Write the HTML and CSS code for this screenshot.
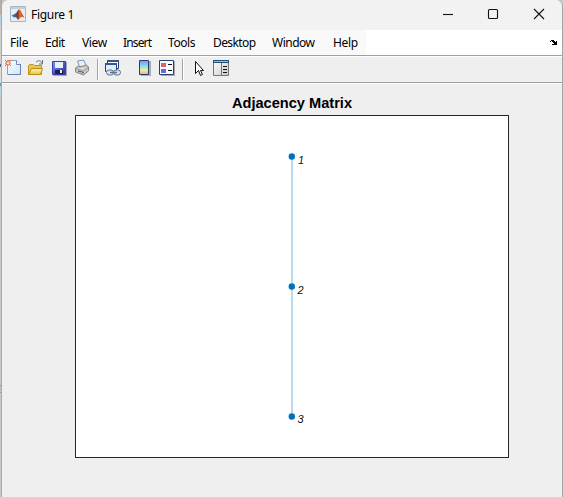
FILE: index.html
```html
<!DOCTYPE html>
<html lang="en">
<head>
<meta charset="utf-8">
<title>Figure 1</title>
<link rel="stylesheet" href="styles.css">
</head>
<body>
<div class="desktop">
<div class="edge"></div>
<main class="window">
  <header class="titlebar">
    <svg class="logo" width="16" height="16" viewBox="0 0 16 16">
      <defs><linearGradient id="flame"><stop offset="0" stop-color="#3f8fc8"/><stop offset=".36" stop-color="#335a88"/><stop offset=".48" stop-color="#8e3420"/><stop offset=".65" stop-color="#ed6925"/><stop offset="1" stop-color="#c04014"/></linearGradient></defs>
      <path fill="#e8edf2" stroke="#a6b5c4" d="M.5 .5h15v15H.5z"/><path fill="#c4cfdb" d="M1 1h14v2H1z"/>
      <path fill="url(#flame)" d="M1.500 9.500l4-2c2-1 2-4 3.500-4 2 0 3 5 5.500 8-2-1-3-1-4 0l-2.500 2.500-2-3-2 .5z"/>
    </svg>
    <span class="caption">Figure 1</span>
    <div class="controls">
      <svg width="12" height="12"><path d="M1 6.500h10"/></svg>
      <svg width="12" height="12"><rect x="1.500" y="1.500" width="9" height="9" rx="1"/></svg>
      <svg width="12" height="12"><path d="M1 1l10 10M11 1L1 11"/></svg>
    </div>
  </header>
  <nav class="menubar">
    <div class="menus"><span class="m-file">File</span><span class="m-edit">Edit</span><span class="m-view">View</span><span class="m-insert">Insert</span><span class="m-tools">Tools</span><span class="m-desktop">Desktop</span><span class="m-window">Window</span><span class="m-help">Help</span></div>
    <svg class="dock" width="8" height="6" viewBox="0 0 8 6" shape-rendering="crispEdges"><path d="M1 0h3v1h1v1h1v-1h1v4H2v-1h2v-1H3v-1H2v-1H1v1H0V1h1z"/></svg>
  </nav>
  <div class="toolbar">
    <svg width="190" height="25" viewBox="0 1 190 25">
      <defs>
        <linearGradient id="paper" x2="1" y2="1"><stop offset="0" stop-color="#fff"/><stop offset="1" stop-color="#cfe3fa"/></linearGradient>
        <linearGradient id="gold" x2="0" y2="1"><stop offset="0" stop-color="#fff4a8"/><stop offset="1" stop-color="#e8c04c"/></linearGradient>
        <linearGradient id="disk" x2="1" y2="1"><stop offset="0" stop-color="#7f93f0"/><stop offset="1" stop-color="#242c98"/></linearGradient>
        <linearGradient id="spectrum" x2="0" y2="1"><stop offset="0" stop-color="#9187ed"/><stop offset=".4" stop-color="#83dcec"/><stop offset=".7" stop-color="#f3eca0"/><stop offset="1" stop-color="#f4a181"/></linearGradient>
        <linearGradient id="silver" x2="1" y2="1"><stop offset="0" stop-color="#fff"/><stop offset="1" stop-color="#c9c9c9"/></linearGradient>
      </defs>
      <!-- new -->
      <path fill="url(#paper)" stroke="#8ba2c2" d="M5.500 4.500h9l4 4v10h-13z"/><path fill="#fff" stroke="#6787b4" d="M14.500 4.500v4h4"/><path fill="none" stroke="#6484b2" d="M18.500 8v10.500H6"/>
      <path stroke="#e08a68" stroke-width="1.400" d="M6 4v6M3 7h6"/><path stroke="#d9603c" d="M3 4l6 6M9 4l-6 6"/><path fill="#ffd8a0" d="M5 6h2v2H5z"/>
      <!-- open -->
      <path fill="#e8c64c" stroke="#c2951a" d="M26.500 18.500v-9l1-1h4l1 1h7v9z"/><path fill="url(#gold)" stroke="#bd8d14" d="M26.500 18.500l3-6h11l-2 6z"/><path fill="none" stroke="#607796" d="M34 6q4-3 6 1M40.500 4v4H37"/>
      <!-- save -->
      <path fill="#a6a7b5" d="M51 6h14v14H51z"/><path fill="url(#disk)" stroke="#3a40a8" d="M50.500 5.500h13v13h-13z"/><path fill="#e4f0fb" d="M53 6h8v6h-8z"/><path fill="#17204e" d="M53 14h8v4h-8z"/><path fill="#eee" d="M58 14h2v3h-2z"/>
      <!-- print -->
      <path fill="#e3f0fc" stroke="#7a94b5" d="M75.500 5l6-1 3 6-7 1z"/><path fill="#c4c4c4" stroke="#888" d="M73.500 12l3-2 1 1 7-2 2 2v4l-5 4-8-3z"/><path fill="#e5e5e5" stroke="#999" d="M74 12.500l7 2 5-3M76 17l6 1 3-2"/><path stroke="#555" d="M76 15l6 1.500"/>
      <path stroke="#a0a0a0" d="M95.500 3v21M180.500 3v21"/><path stroke="#fff" d="M96.500 3v21M181.500 3v21"/>
      <!-- link -->
      <path fill="#fff" stroke="#203d75" d="M105.500 4.500h11v8h-11z"/><path fill="#315990" d="M105 4h12v2h-12z"/><path fill="#e6eef8" stroke="#203d75" d="M103.500 7.500h11v8h-11z"/><path fill="#315990" d="M103 7h12v2h-12z"/><rect x="104.500" y="14" width="7" height="5" rx="2.500" fill="#dce3ec" stroke="#61738f"/><rect x="111.500" y="14" width="7" height="5" rx="2.500" fill="#dce3ec" stroke="#61738f"/><path stroke="#5d7191" stroke-width="1.500" d="M108 16.500h7"/>
      <!-- colorbar -->
      <path fill="#aaa" d="M139 5h10v15h-10z"/><path fill="url(#spectrum)" stroke="#24416f" d="M137.500 4.500h9v14h-9z"/>
      <!-- legend -->
      <path fill="#aaa" d="M159 5h14v15h-14z"/><path fill="#f8faff" stroke="#24416f" d="M157.500 4.500h14v14h-14z"/><path fill="#e56060" d="M159 7h5v4h-5z"/><path fill="#6868df" d="M159 13h5v4h-5z"/><path stroke="#111" d="M166 8.500h4M166 14.500h4"/>
    </svg>
    <svg width="40" height="25" viewBox="0 1 40 25">
      <path fill="#fff" stroke="#111" d="M3.500 5.500v12l3-3 2 5 2-1-2-4h3z"/>
      <path fill="url(#silver)" stroke="#777" d="M21.500 4.500h15v15h-15z"/><path fill="#244f73" d="M21 4h16v3H21z"/><path fill="#8cc3dc" d="M22 5h14v1H22z"/><path stroke="#777" d="M29.500 7v12"/><path stroke="#111" d="M31 10.500h4M31 13.500h4M31 16.500h4"/>
    </svg>
  </div>
  <section class="figure">
    <h1>Adjacency Matrix</h1>
    <svg class="axes" width="434" height="343" viewBox="0 0 434 343">
      <rect x=".5" y=".5" width="433" height="342" fill="#fff" stroke="#262626"/>
      <path stroke="#b9d9ed" stroke-width="2" d="M217 41v260"/>
      <g fill="#0072bd"><circle cx="216.800" cy="41.500" r="3.200"/><circle cx="216.800" cy="171.500" r="3.200"/><circle cx="216.800" cy="301.500" r="3.200"/></g>
      <g class="labels"><text x="223" y="49">1</text><text x="222.500" y="179">2</text><text x="222.500" y="308">3</text></g>
    </svg>
  </section>
</main>
</div>
</body>
</html>
```

FILE: styles.css
```css
* { box-sizing: border-box; }
body { margin: 0; font: 12px "Noto Sans", sans-serif; color: #000; overflow: hidden; }
svg { display: block; flex: none; }
.desktop { width: 563px; height: 497px; display: flex; background: #c8c8c8; }
.edge { width: 2px; flex: none; border-right: 1px solid #a9a9a9; background: linear-gradient(#b6b0ad 0 15px, #b5d4e4 15px 24px, #d0d0d0 24px 64px, #536b86 64px 67px, #ddd 67px 83px, #5b97bd 83px 86px, #b8d6e7 86px 95px, #c9c9c9 95px 385px, #999 385px 386px, #c0c0c0 386px 392px, #999 392px 393px, #c9c9c9 393px); }
.window { width: 561px; border-right: 1px solid #a4a4a4; border-radius: 7px 7px 0 0; overflow: hidden; background: #efefef; }
.titlebar { height: 30px; display: flex; align-items: center; padding: 0 17px 2px 8px; background: #f2f2f2; }
.caption { margin: 1px 0 0 5px; letter-spacing: -.3px; }
.controls { display: flex; gap: 34px; margin-left: auto; }
.controls svg { fill: none; stroke: #111; stroke-width: 1.1; }
.controls svg:first-child { margin-right: -1px; }
.menubar { height: 27px; display: flex; background: #fff; border-bottom: 1px solid #fff; box-shadow: inset 0 -1px #a0a0a0; }
.menus { width: 364px; height: 25px; display: flex; align-items: center; padding-left: 8px; background: #f9f9f9; }
.menus span { white-space: nowrap; flex: none; }
.m-file { width: 35px; letter-spacing: -.25px; }
.m-edit { width: 37px; letter-spacing: -.45px; }
.m-view { width: 41px; letter-spacing: -.35px; }
.m-insert { width: 45px; letter-spacing: -.85px; }
.m-tools { width: 45px; letter-spacing: -.45px; }
.m-desktop { width: 59px; letter-spacing: -.6px; }
.m-window { width: 61px; letter-spacing: -.5px; }
.m-help { letter-spacing: -.35px; }
.dock { margin: 10px 4px 0 auto; }
.toolbar { height: 27px; display: flex; border-bottom: 1px solid #fff; box-shadow: inset 0 -1px #a0a0a0; }
.figure { padding: 10px 0 0 73px; }
h1 { width: 434px; height: 21px; margin: 0; font: bold 14.600px/18px "Liberation Sans", sans-serif; text-align: center; }
.labels { font: italic 11px "Liberation Sans", sans-serif; fill: #111; }
```
